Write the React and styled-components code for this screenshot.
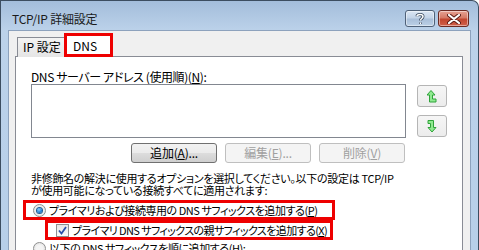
import React from "react";
import styled, { createGlobalStyle } from "styled-components";

const GlobalStyle = createGlobalStyle`
  html, body {
    margin: 0;
    padding: 0;
    background: #ffffff;
  }
  body {
    font-family: "Noto Sans CJK JP", "DejaVu Sans", sans-serif;
    font-size: 12px;
    color: #000;
  }
`;

const Window = styled.div`
  width: 479px;
  height: 250px;
  box-sizing: border-box;
  border: 1px solid #3c4d60;
  border-bottom: none;
  border-top-right-radius: 7px;
  background: linear-gradient(180deg, #a3bddb 0px, #bcd2ea 30px, #b7cfe9 100%);
  display: flex;
  flex-direction: column;
  overflow: hidden;
  font-feature-settings: "palt";
`;

const TitleBar = styled.div`
  height: 29px;
  flex: 0 0 29px;
  display: flex;
  align-items: flex-start;
  padding: 0 9px 0 11px;
`;

const Title = styled.div`
  flex: 1;
  margin-top: 11px;
  font-size: 12px;
  line-height: 14px;
  color: #1a1a1a;
  letter-spacing: -0.2px;
`;

const CaptionButton = styled.div`
  margin-top: 9px;
  width: ${(p) => p.w}px;
  height: 17px;
  box-sizing: border-box;
  border: 1px solid ${(p) => (p.close ? "#6b2a22" : "#4f6178")};
  border-radius: 3px;
  background: ${(p) =>
    p.close
      ? "linear-gradient(180deg, #e6a293 0%, #d67a66 45%, #c2462f 55%, #d0604a 100%)"
      : "linear-gradient(180deg, #dbe6f3 0%, #c3d4e8 45%, #a9bfd9 55%, #bcd0e6 100%)"};
  box-shadow: inset 0 0 0 1px rgba(255, 255, 255, 0.45);
  display: flex;
  align-items: center;
  justify-content: center;
  margin-left: ${(p) => p.gap || 0}px;
`;

const Client = styled.div`
  flex: 1;
  margin: 0 7px 0 7px;
  background: #f0f0f0;
  border: 1px solid #8da2bd;
  border-bottom: none;
  padding: 2px 7px 0 6px;
  display: flex;
  flex-direction: column;
`;

const TabStrip = styled.div`
  display: flex;
  align-items: flex-end;
  height: 24px;
  padding-left: 2px;
  position: relative;
  z-index: 1;
  margin-bottom: -1px;
`;

const Tab = styled.div`
  box-sizing: border-box;
  height: ${(p) => (p.active ? 24 : 20)}px;
  padding: ${(p) => (p.active ? "3px 0 0 6px" : "2px 0 0 5px")};
  width: ${(p) => (p.active ? 49 : 48)}px;
  border: ${(p) => (p.active ? "3px solid #ee0000" : "1px solid #898c95")};
  border-bottom: ${(p) => (p.active ? "3px solid #ee0000" : "none")};
  background: ${(p) =>
    p.active ? "#ffffff" : "linear-gradient(180deg, #f3f3f3, #e5e5e5)"};
  margin-left: ${(p) => (p.active ? -1 : 0)}px;
  font-size: 12px;
  line-height: 14px;
`;

const Panel = styled.div`
  flex: 1;
  background: #ffffff;
  border: 1px solid #898c95;
  border-bottom: none;
  padding: 13px 0 0 15px;
  display: flex;
  flex-direction: column;
`;

const Label = styled.div`
  line-height: 14px;
  font-size: 12px;
  letter-spacing: -0.4px;
`;

const Key = styled.span`
  text-decoration: underline;
  text-underline-offset: 1px;
`;

const ListRow = styled.div`
  display: flex;
  align-items: flex-start;
`;

const ListBox = styled.div`
  width: 375px;
  height: 54px;
  box-sizing: border-box;
  border: 1px solid #828790;
  background: #fff;
`;

const SideButtons = styled.div`
  display: flex;
  flex-direction: column;
  gap: 8px;
  margin-left: 11px;
  margin-top: 1px;
`;

const IconButton = styled.div`
  width: 30px;
  height: 22px;
  box-sizing: border-box;
  border: 1px solid #b5b5b5;
  border-radius: 3px;
  background: linear-gradient(180deg, #f6f6f6, #ececec);
  display: flex;
  align-items: center;
  justify-content: center;
`;

const ButtonRow = styled.div`
  display: flex;
  gap: 8px;
  margin-top: 5px;
  margin-left: 100px;
`;

const PushButton = styled.div`
  width: 86px;
  height: 20px;
  box-sizing: border-box;
  border: 1px solid ${(p) => (p.disabled ? "#bfbfbf" : "#707070")};
  border-radius: 3px;
  background: ${(p) =>
    p.disabled
      ? "#f4f4f4"
      : "linear-gradient(180deg, #f2f2f2 0%, #ebebeb 50%, #dddddd 51%, #cfcfcf 100%)"};
  color: ${(p) => (p.disabled ? "#a0a0a0" : "#000")};
  text-align: center;
  line-height: 17px;
  font-size: 12px;
  letter-spacing: -0.2px;
`;

const Paragraph = styled.div`
  margin-top: 9px;
  line-height: 12px;
  font-size: 11px;
  letter-spacing: -0.3px;
  white-space: nowrap;
`;

const Highlight = styled.div`
  box-sizing: border-box;
  border: 3px solid #ee0000;
  height: ${(p) => p.h}px;
  width: ${(p) => p.w}px;
  margin-left: ${(p) => p.ml}px;
  margin-top: ${(p) => p.mt}px;
  display: flex;
  align-items: center;
  padding-left: ${(p) => p.pl}px;
  gap: 3px;
  white-space: nowrap;
  font-size: 11px;
  letter-spacing: ${(p) => p.ls}px;
  line-height: 14px;
`;

const Option = styled.div`
  display: flex;
  align-items: center;
  gap: 3px;
  margin-top: ${(p) => p.mt || 0}px;
  margin-left: ${(p) => p.ml || 0}px;
  line-height: 14px;
  white-space: nowrap;
  font-size: 11px;
  letter-spacing: -0.45px;
`;

const Radio = styled.span`
  width: 13px;
  height: 13px;
  box-sizing: border-box;
  border-radius: 50%;
  border: 1px solid #8e8f8f;
  background: radial-gradient(circle, #f4f4f4 40%, #d9d9d9 100%);
  display: inline-flex;
  align-items: center;
  justify-content: center;
  flex: 0 0 13px;
  &::after {
    content: "";
    display: ${(p) => (p.checked ? "block" : "none")};
    width: 5px;
    height: 5px;
    border-radius: 50%;
    background: radial-gradient(circle at 40% 35%, #8fd3ff 0%, #1e7bd1 60%, #0a4c8c 100%);
    box-shadow: 0 0 0 1px #1d5b94;
  }
`;

const Check = styled.span`
  width: 13px;
  height: 13px;
  box-sizing: border-box;
  border: 1px solid #8e8f8f;
  background: linear-gradient(180deg, #e6e6e6, #fafafa);
  display: inline-flex;
  align-items: center;
  justify-content: center;
  flex: 0 0 13px;
`;

function HelpGlyph() {
  return (
    <svg width="10" height="12" viewBox="0 0 10 12">
      <path
        d="M2 3.2 C2 1 8 1 8 3.5 C8 5.5 5.5 5.5 5.5 7.5 M5.5 9.5 L5.5 11"
        fill="none"
        stroke="#3a4a5e"
        strokeWidth="3"
      />
      <path
        d="M2 3.2 C2 1 8 1 8 3.5 C8 5.5 5.5 5.5 5.5 7.5 M5.5 9.5 L5.5 11"
        fill="none"
        stroke="#ffffff"
        strokeWidth="1.5"
      />
    </svg>
  );
}

function CloseGlyph() {
  return (
    <svg width="14" height="10" viewBox="0 0 14 10">
      <path d="M2 1 L12 9 M12 1 L2 9" stroke="#5a1d16" strokeWidth="4" strokeLinecap="round" />
      <path d="M2 1 L12 9 M12 1 L2 9" stroke="#ffffff" strokeWidth="2.2" strokeLinecap="round" />
    </svg>
  );
}

function UpArrow() {
  return (
    <svg width="10" height="13" viewBox="0 0 10 13">
      <polygon
        points="4,0.5 8,5 5.5,5 5.5,9 9,9 9,12 2.5,12 2.5,5 0,5"
        fill="#8fea8f"
        stroke="#2fa33a"
        strokeWidth="1"
      />
    </svg>
  );
}

function DownArrow() {
  return (
    <svg width="10" height="13" viewBox="0 0 10 13">
      <polygon
        points="1,0.5 6.5,0.5 6.5,7.5 9,7.5 5,12 1,7.5 3.5,7.5 3.5,3.5 1,3.5"
        fill="#8fea8f"
        stroke="#2fa33a"
        strokeWidth="1"
      />
    </svg>
  );
}

function CheckMark() {
  return (
    <svg width="9" height="9" viewBox="0 0 9 9">
      <path d="M1 4.5 L3.5 7.5 L8 1" fill="none" stroke="#2a4fa8" strokeWidth="1.8" />
    </svg>
  );
}

export default function App() {
  return (
    <>
      <GlobalStyle />
      <Window>
        <TitleBar>
          <Title>TCP/IP 詳細設定</Title>
          <CaptionButton w={30}>
            <HelpGlyph />
          </CaptionButton>
          <CaptionButton w={31} close gap={3}>
            <CloseGlyph />
          </CaptionButton>
        </TitleBar>
        <Client>
          <TabStrip>
            <Tab>IP 設定</Tab>
            <Tab active>DNS</Tab>
          </TabStrip>
          <Panel>
            <Label>
              DNS サーバー アドレス (使用順)(<Key>N</Key>):
            </Label>
            <ListRow>
              <ListBox />
              <SideButtons>
                <IconButton>
                  <UpArrow />
                </IconButton>
                <IconButton>
                  <DownArrow />
                </IconButton>
              </SideButtons>
            </ListRow>
            <ButtonRow>
              <PushButton>
                追加(<Key>A</Key>)...
              </PushButton>
              <PushButton disabled>
                編集(<Key>E</Key>)...
              </PushButton>
              <PushButton disabled>
                削除(<Key>V</Key>)
              </PushButton>
            </ButtonRow>
            <Paragraph>
              非修飾名の解決に使用するオプションを選択してください。以下の設定は TCP/IP
              <br />
              が使用可能になっている接続すべてに適用されます:
            </Paragraph>
            <Highlight w={312} h={20} ml={-8} mt={4} pl={7} ls={-0.45}>
              <Radio checked />
              <span>
                プライマリおよび接続専用の DNS サフィックスを追加する(<Key>P</Key>)
              </span>
            </Highlight>
            <Highlight w={288} h={20} ml={14} mt={0} pl={8} ls={-0.6}>
              <Check>
                <CheckMark />
              </Check>
              <span>
                プライマリ DNS サフィックスの親サフィックスを追加する(<Key>X</Key>)
              </span>
            </Highlight>
            <Option ml={2} mt={1}>
              <Radio />
              <span>
                以下の DNS サフィックスを順に追加する(<Key>H</Key>):
              </span>
            </Option>
          </Panel>
        </Client>
      </Window>
    </>
  );
}
